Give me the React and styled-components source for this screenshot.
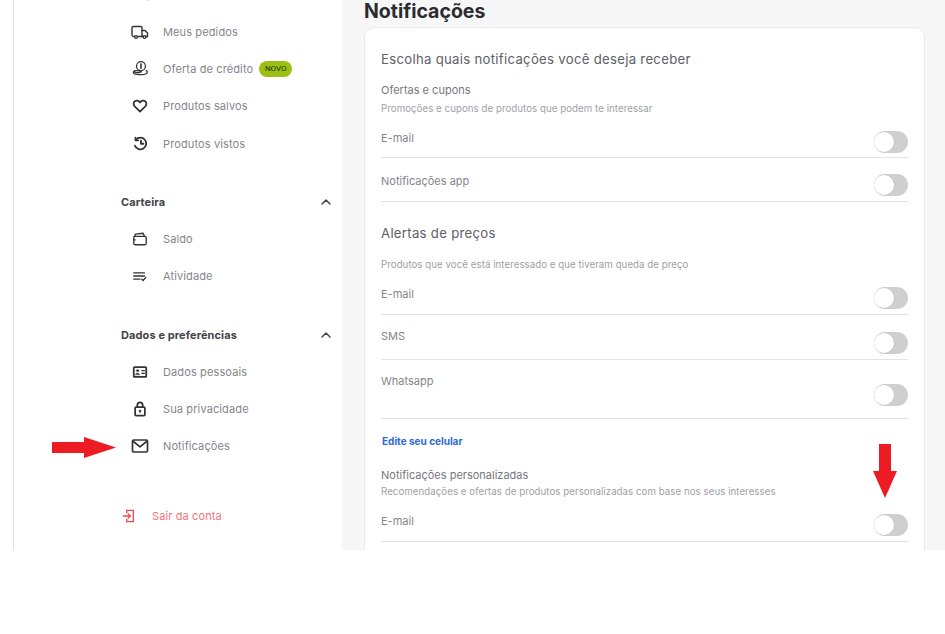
import React from "react";
import styled, { createGlobalStyle } from "styled-components";

const Global = createGlobalStyle`
  html, body { margin: 0; padding: 0; background: #fff; }
  body { font-family: Inter, "Open Sans", "Liberation Sans", sans-serif; color: #333; }
  * { box-sizing: border-box; }
`;

const Page = styled.div`
  position: relative;
  display: flex;
  width: 945px;
  height: 550px;
  overflow: hidden;
  background: #f7f7f7;
`;
const Gutter = styled.div`
  width: 13px;
  background: #fff;
  flex: none;
`;
const Sidebar = styled.aside`
  width: 329px;
  flex: none;
  background: #fff;
  border-left: 1px solid #e2e2e2;
  padding-left: 107px;
  padding-right: 9px;
`;
const SectionHead = styled.div`
  display: flex;
  justify-content: space-between;
  align-items: center;
  height: 16px;
  margin-top: ${(p) => p.$top}px;
  margin-bottom: ${(p) => p.$bottom}px;
  font-size: 11px;
  line-height: 16px;
  font-weight: 700;
  letter-spacing: 0.1px;
  color: #444448;
`;
const NavRow = styled.div`
  display: flex;
  align-items: center;
  height: 37px;
  margin-top: ${(p) => p.$shift || 0}px;
  padding-left: 10px;
  font-size: 11px;
  letter-spacing: 0.12px;
  color: #85858c;
`;
const NavIcon = styled.span`
  display: flex;
  justify-content: center;
  align-items: center;
  width: 18px;
  height: 18px;
  margin-right: 14px;
  flex: none;
`;
const Badge = styled.span`
  display: inline-flex;
  align-items: center;
  justify-content: center;
  width: 33px;
  height: 16px;
  margin-left: 6px;
  border-radius: 8px;
  background: #9cbf14;
  color: #24310a;
  font-family: Roboto, sans-serif;
  font-size: 8px;
  letter-spacing: 0;
`;
const Logout = styled.div`
  display: flex;
  align-items: center;
  height: 37px;
  margin-top: 33px;
  padding-left: 1px;
  font-size: 11px;
  letter-spacing: 0.12px;
  color: #f4737b;
  svg { margin-right: 17px; flex: none; }
`;
const Main = styled.main`
  flex: 1;
  padding: 0 20px 0 22px;
`;
const Title = styled.h1`
  margin: 0;
  height: 27px;
  padding-top: 1px;
  font-size: 19.5px;
  line-height: 21px;
  font-weight: 700;
  color: #2b2b30;
`;
const Card = styled.section`
  height: 560px;
  padding: 22px 16px 0;
  background: #fff;
  border: 1px solid #e9e9e9;
  border-radius: 10px;
`;
const Heading = styled.h2`
  margin: ${(p) => p.$top || 0}px 0 0;
  font-size: 13.2px;
  line-height: 18px;
  font-weight: 400;
  letter-spacing: 0.28px;
  color: #606066;
`;
const GroupTitle = styled.div`
  margin-top: ${(p) => p.$top}px;
  font-size: 11px;
  line-height: 16px;
  color: #77777d;
`;
const Sub = styled.div`
  margin-top: ${(p) => p.$top}px;
  font-size: 9.7px;
  line-height: 14px;
  letter-spacing: 0.05px;
  color: #a0a0a5;
`;
const Row = styled.div`
  display: flex;
  justify-content: space-between;
  align-items: flex-start;
  height: ${(p) => p.$h}px;
  border-bottom: 1px solid #e3e3e3;
`;
const RowLabel = styled.span`
  margin-top: ${(p) => p.$top}px;
  font-size: 11px;
  line-height: 16px;
  color: #85858b;
`;
const Toggle = styled.span`
  position: relative;
  display: block;
  width: 34px;
  height: 22px;
  margin-top: ${(p) => p.$top}px;
  border-radius: 11px;
  background: #cfcfcf;
  &::after {
    content: "";
    position: absolute;
    left: 0;
    top: 1px;
    width: 20px;
    height: 20px;
    border-radius: 50%;
    background: #fff;
    box-shadow: 0 0 2px rgba(0, 0, 0, 0.1);
  }
`;
const EditLink = styled.a`
  display: block;
  margin: 15px 0 0 1px;
  font-size: 10px;
  line-height: 14px;
  font-weight: 700;
  color: #2a6bd4;
`;
const Marker = styled.svg`
  position: absolute;
  left: ${(p) => p.$x}px;
  top: ${(p) => p.$y}px;
  display: block;
`;

const Icon = ({ children, size = 18, sw = 1.7 }) => (
  <svg width={size} height={size} viewBox="0 0 18 18" fill="none" stroke="#333" strokeWidth={sw} strokeLinecap="round" strokeLinejoin="round">
    {children}
  </svg>
);

const Truck = () => (
  <Icon sw={1.4}>
    <path d="M3 13.500H2.600A1.600 1.600 0 0 1 1 12V5A1.500 1.500 0 0 1 2.500 3.500H10A1 1 0 0 1 11 4.500V13.500H7" />
    <path d="M11 7.500H14L16.500 10V13.500H15" />
    <path d="M11 13.500H12" />
    <circle cx="5" cy="14" r="1.400" />
    <circle cx="13.500" cy="14" r="1.400" />
  </Icon>
);
const Credit = () => (
  <Icon sw={1.3} size={17}>
    <circle cx="9.500" cy="6.500" r="4.700" />
    <path d="M9.500 4.200V8.800" strokeWidth="1.700" />
    <path d="M3 11.500C1.500 12 1 13 1.700 14C3 15.700 12 16.200 15 14.500C16.700 13.500 16.500 12 15 11.300" />
    <path d="M2 12.700C5 13.700 8 13.700 10 12.500C7.500 11.300 5 10.800 3 11.500" />
  </Icon>
);
const Heart = () => (
  <Icon sw={2} size={16}>
    <path d="M9 15.300L3 9.400C1.400 7.700 1.500 5 3.200 3.700C5 2.400 7.500 2.800 9 5C10.500 2.800 13 2.400 14.800 3.700C16.500 5 16.600 7.700 15 9.400Z" />
  </Icon>
);
const History = () => (
  <Icon sw={2.2} size={15}>
    <path d="M3.500 4.500A7 7 0 1 1 2.300 11.500" />
    <path d="M3 2V5.200H6.200" />
    <path d="M9.500 5.500V9.300H12.500" />
  </Icon>
);
const Wallet = () => (
  <Icon sw={1.5} size={16}>
    <path d="M2 7.500A1.500 1.500 0 0 1 3.500 6H14.500A1.500 1.500 0 0 1 16 7.500V14A1.500 1.500 0 0 1 14.500 15.500H3.500A1.500 1.500 0 0 1 2 14Z" />
    <path d="M2.500 6.500L4 3.500L12.500 2.500L14 6" />
    <path d="M2 10H3.500" />
  </Icon>
);
const ListCheck = () => (
  <Icon sw={1.5} size={16}>
    <path d="M2 5.500H14" />
    <path d="M2 9H14" />
    <path d="M2 12.500H9" />
    <path d="M11 12.700L12.500 14L15.500 10.500" />
  </Icon>
);
const IdCard = () => (
  <Icon sw={2} size={16}>
    <rect x="2" y="3.500" width="14" height="11" rx="0.800" />
    <circle cx="6.300" cy="7.500" r="1.300" fill="#333" strokeWidth="0.600" />
    <path d="M3.800 11.700C4.500 10 8 10 8.700 11.700Z" fill="#333" strokeWidth="0.600" />
    <path d="M11 7.500H14" strokeWidth="1.300" />
    <path d="M11 10.500H14" strokeWidth="1.300" />
  </Icon>
);
const Lock = () => (
  <Icon sw={2} size={16}>
    <rect x="3.500" y="7" width="11" height="9.500" rx="1.200" />
    <path d="M6 7V4.500A3 3 0 0 1 12 4.500V7" />
    <circle cx="9" cy="11" r="1" fill="#333" strokeWidth="0.600" />
    <path d="M9 11V13" strokeWidth="1.200" />
  </Icon>
);
const Mail = () => (
  <Icon sw={1.7}>
    <rect x="1.500" y="3" width="15" height="12" rx="1.200" />
    <path d="M1.800 4L9 9.800L16.200 4" />
  </Icon>
);
const Chevron = () => (
  <svg width="14" height="14" viewBox="0 0 14 14" fill="none" stroke="#444" strokeWidth="1.500" strokeLinecap="round" strokeLinejoin="round">
    <path d="M3 9L7 5L11 9" />
  </svg>
);
const Exit = () => (
  <svg width="13" height="14" viewBox="0 0 14 16" fill="none" stroke="#f0464f" strokeWidth="1.500" strokeLinecap="round" strokeLinejoin="round">
    <path d="M5 1.500H12.500V14.500H5" />
    <path d="M5 4V1.500" />
    <path d="M5 14.500V12" />
    <path d="M1 8H9" />
    <path d="M6.500 5.300L9.200 8L6.500 10.700" />
  </svg>
);

const NavItem = ({ icon, shift, children }) => (
  <NavRow $shift={shift}>
    <NavIcon>{icon}</NavIcon>
    {children}
  </NavRow>
);

const SettingRow = ({ label, h, labelTop, toggleTop }) => (
  <Row $h={h}>
    <RowLabel $top={labelTop}>{label}</RowLabel>
    <Toggle $top={toggleTop} />
  </Row>
);

export default function App() {
  return (
    <>
      <Global />
      <Page>
        <Gutter />
        <Sidebar>
          <SectionHead $top={-14} $bottom={11}>Compras</SectionHead>
          <NavItem icon={<Truck />}>Meus pedidos</NavItem>
          <NavItem icon={<Credit />}>
            Oferta de crédito<Badge>NOVO</Badge>
          </NavItem>
          <NavItem icon={<Heart />}>Produtos salvos</NavItem>
          <NavItem icon={<History />} shift={1}>Produtos vistos</NavItem>

          <SectionHead $top={32} $bottom={10}>Carteira<Chevron /></SectionHead>
          <NavItem icon={<Wallet />}>Saldo</NavItem>
          <NavItem icon={<ListCheck />}>Atividade</NavItem>

          <SectionHead $top={33} $bottom={10}>Dados e preferências<Chevron /></SectionHead>
          <NavItem icon={<IdCard />}>Dados pessoais</NavItem>
          <NavItem icon={<Lock />}>Sua privacidade</NavItem>
          <NavItem icon={<Mail />}>Notificações</NavItem>

          <Logout><Exit />Sair da conta</Logout>
        </Sidebar>
        <Main>
          <Title>Notificações</Title>
          <Card>
            <Heading>Escolha quais notificações você deseja receber</Heading>
            <GroupTitle $top={14}>Ofertas e cupons</GroupTitle>
            <Sub $top={4}>Promoções e cupons de produtos que podem te interessar</Sub>
            <SettingRow label="E-mail" h={42} labelTop={14} toggleTop={15} />
            <SettingRow label="Notificações app" h={44} labelTop={15} toggleTop={16} />

            <Heading $top={22}>Alertas de preços</Heading>
            <Sub $top={16}>Produtos que você está interessado e que tiveram queda de preço</Sub>
            <SettingRow label="E-mail" h={43} labelTop={14} toggleTop={15} />
            <SettingRow label="SMS" h={45} labelTop={13} toggleTop={17} />
            <SettingRow label="Whatsapp" h={59} labelTop={13} toggleTop={24} />
            <EditLink>Edite seu celular</EditLink>

            <GroupTitle $top={19}>Notificações personalizadas</GroupTitle>
            <Sub $top={2}>Recomendações e ofertas de produtos personalizadas com base nos seus interesses</Sub>
            <SettingRow label="E-mail" h={43} labelTop={14} toggleTop={15} />
          </Card>
        </Main>
        <Marker $x={52} $y={437} width="64" height="21" viewBox="0 0 64 21">
          <path d="M0 5H32V0L64 10.500L32 21V16H0Z" fill="#ed1c24" />
        </Marker>
        <Marker $x={873} $y={444} width="24" height="54" viewBox="0 0 24 54">
          <path d="M6 0H18V27H24L12 54L0 27H6Z" fill="#ed1c24" />
        </Marker>
      </Page>
    </>
  );
}
